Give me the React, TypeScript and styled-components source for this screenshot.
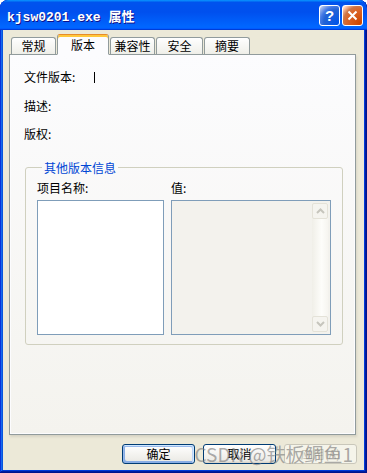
import React from 'react'
import styled, { createGlobalStyle } from 'styled-components'

const GlobalStyle = createGlobalStyle`
  html, body {
    margin: 0;
    padding: 0;
    background: #fff;
  }
  body {
    font-family: 'Noto Sans CJK SC', 'Liberation Sans', sans-serif;
    font-size: 12px;
    color: #000;
  }
`

const Window = styled.div`
  position: relative;
  width: 367px;
  height: 473px;
  display: flex;
  flex-direction: column;
  background: #0831d9;
  border-radius: 8px 8px 0 0;
  box-shadow: inset -1px -1px #00138c, inset 1px 1px #0831d9, inset -2px -2px #001ea0,
    inset 2px 2px #166aee, inset -3px -3px #003bda, inset 3px 3px #0855dd;
  overflow: hidden;
`

const TitleBar = styled.div`
  height: 30px;
  flex: none;
  display: flex;
  align-items: center;
  padding: 0 4px 0 7px;
  background: linear-gradient(180deg, #0997ff, #0053ee 8%, #0050ee 40%, #06f 88%, #06f 93%, #005bff 95%, #003dd7 96%, #003dd7);
  border-radius: 8px 8px 0 0;
`

const Title = styled.div`
  font-family: 'Liberation Mono', 'Noto Sans CJK SC', monospace;
  font-weight: bold;
  font-size: 13px;
  color: #fff;
  text-shadow: 1px 1px #0f1089;
  white-space: nowrap;
`

const Controls = styled.div`
  margin-left: auto;
  display: flex;
  gap: 2px;
`

const CaptionButton = styled.div<{ $close?: boolean }>`
  width: 21px;
  height: 21px;
  box-sizing: border-box;
  border: 1px solid #fff;
  border-radius: 3px;
  display: flex;
  align-items: center;
  justify-content: center;
  color: #fff;
  font-family: 'Liberation Sans', sans-serif;
  font-weight: bold;
  font-size: 15px;
  background: ${(p) =>
    p.$close
      ? 'radial-gradient(circle at 90% 90%, #cc4600 0, #dc6527 55%, #cd7546 70%, #ffccb2 90%, #fff 100%)'
      : 'radial-gradient(circle at 90% 90%, #0054e9 0, #2263d5 55%, #4479e4 70%, #a3bbec 90%, #fff 100%)'};
`

const Body = styled.div`
  flex: 1;
  margin: 0 3px 3px;
  background: #ece9d8;
  display: flex;
  flex-direction: column;
  padding: 4px 7px 0 6px;
`

const TabStrip = styled.div`
  position: relative;
  z-index: 1;
  height: 21px;
  display: flex;
  align-items: flex-end;
  padding-left: 2px;
  margin-bottom: -1px;
`

const Tab = styled.div<{ $active?: boolean; $w: number }>`
  box-sizing: border-box;
  width: ${(p) => p.$w}px;
  height: ${(p) => (p.$active ? 21 : 17)}px;
  margin-right: 1px;
  margin-bottom: ${(p) => (p.$active ? 0 : 1)}px;
  border: 1px solid #919b9c;
  border-bottom: ${(p) => (p.$active ? '1px solid #fcfcfe' : 'none')};
  border-top-color: ${(p) => (p.$active ? '#e68b2c' : '#919b9c')};
  border-radius: 3px 3px 0 0;
  box-shadow: ${(p) => (p.$active ? 'inset 0 2px #ffc83c' : 'none')};
  background: ${(p) =>
    p.$active ? '#fcfcfe' : 'linear-gradient(180deg, #fff, #fafaf9 26%, #f0f0ea 95%, #ecebe5)'};
  display: flex;
  align-items: ${(p) => (p.$active ? 'flex-start' : 'center')};
  padding-top: ${(p) => (p.$active ? 3 : 0)}px;
  justify-content: center;
  line-height: 14px;
  white-space: nowrap;
`

const Panel = styled.div`
  box-sizing: border-box;
  width: 347px;
  height: 381px;
  flex: none;
  border: 1px solid #919b9c;
  background: linear-gradient(180deg, #fcfcfe, #f4f3ee);
  box-shadow: inset 1px 1px #fcfcfe, inset -1px -1px #fcfcfe, 1px 2px 2px 0 rgba(208, 206, 191, 0.75);
  padding: 8px 0 0 14px;
`

const InfoRow = styled.div`
  height: 28.5px;
  display: flex;
  align-items: center;
  line-height: 14px;
`

const InfoLabel = styled.div`
  width: 70px;
  flex: none;
`

const Caret = styled.span`
  width: 1px;
  height: 11px;
  background: #000;
`

const Group = styled.fieldset`
  box-sizing: border-box;
  width: 318px;
  margin: 12px 0 0 1px;
  padding: 6px 11px 9px;
  border: 1px solid #d0d0bf;
  border-radius: 3px;
`

const GroupTitle = styled.legend`
  margin-left: 5px;
  padding: 0 2px;
  color: #0046d5;
  line-height: 14px;
`

const Columns = styled.div`
  display: grid;
  grid-template-columns: 127px 160px;
  column-gap: 7px;
  row-gap: 5px;
`

const ColumnHead = styled.div`
  line-height: 14px;
`

const ListBox = styled.div<{ $disabled?: boolean }>`
  box-sizing: border-box;
  height: 135px;
  border: 1px solid #7f9db9;
  background: ${(p) => (p.$disabled ? '#f3f2ed' : '#fff')};
  display: flex;
  justify-content: flex-end;
  padding: 2px 2px 2px 0;
`

const ScrollBar = styled.div`
  width: 16px;
  display: flex;
  flex-direction: column;
  justify-content: space-between;
  background: linear-gradient(90deg, #f0efe8, #fdfdfa 60%, #f6f5f0);
`

const ArrowButton = styled.div`
  box-sizing: border-box;
  width: 16px;
  height: 16px;
  border: 1px solid #e4e2d8;
  border-radius: 2px;
  background: #f5f4ef;
  display: flex;
  align-items: center;
  justify-content: center;
`

const ButtonRow = styled.div`
  display: flex;
  justify-content: flex-end;
  gap: 8px;
  margin-top: 9px;
`

const Button = styled.div<{ $default?: boolean; $disabled?: boolean }>`
  box-sizing: border-box;
  width: 73px;
  height: 20px;
  border: 1px solid ${(p) => (p.$disabled ? '#c9c7ba' : '#003c74')};
  border-radius: 3px;
  display: flex;
  align-items: center;
  justify-content: center;
  line-height: 14px;
  color: ${(p) => (p.$disabled ? '#c4c1b2' : '#000')};
  background: ${(p) =>
    p.$disabled ? '#f5f4ea' : 'linear-gradient(180deg, #fff, #ecebe6 86%, #d6d0c5)'};
  box-shadow: ${(p) =>
    p.$default
      ? 'inset -1px 1px #cee7ff, inset 1px 2px #98b8ea, inset -2px 2px #bcd4f6, inset 1px -1px #89ade4, inset 2px -2px #89ade4'
      : 'none'};
`

const Watermark = styled.div`
  position: absolute;
  right: 14px;
  bottom: 7px;
  font-size: 19px;
  line-height: 24px;
  color: rgba(125, 125, 125, 0.65);
  white-space: nowrap;
  pointer-events: none;
`

const Chevron = ({ down }: { down?: boolean }) => (
  <svg width="9" height="6" viewBox="0 0 9 6">
    <polyline
      points={down ? '1,1 4.5,4.5 8,1' : '1,5 4.5,1.5 8,5'}
      fill="none"
      stroke="#c6c5bd"
      strokeWidth="2"
    />
  </svg>
)

const tabs = [
  { label: '常规', w: 45 },
  { label: '版本', w: 52, active: true },
  { label: '兼容性', w: 45 },
  { label: '安全', w: 47 },
  { label: '摘要', w: 46 },
]

const App = () => (
  <>
    <GlobalStyle />
    <Window>
      <TitleBar>
        <Title>kjsw0201.exe 属性</Title>
        <Controls>
          <CaptionButton>?</CaptionButton>
          <CaptionButton $close>
            <svg width="11" height="11" viewBox="0 0 11 11">
              <path d="M1.5 1.5 L9.5 9.5 M9.5 1.5 L1.5 9.5" stroke="#fff" strokeWidth="2" />
            </svg>
          </CaptionButton>
        </Controls>
      </TitleBar>
      <Body>
        <TabStrip>
          {tabs.map((t) => (
            <Tab key={t.label} $w={t.w} $active={t.active}>
              {t.label}
            </Tab>
          ))}
        </TabStrip>
        <Panel>
          <InfoRow>
            <InfoLabel>文件版本:</InfoLabel>
            <Caret />
          </InfoRow>
          <InfoRow>
            <InfoLabel>描述:</InfoLabel>
          </InfoRow>
          <InfoRow>
            <InfoLabel>版权:</InfoLabel>
          </InfoRow>
          <Group>
            <GroupTitle>其他版本信息</GroupTitle>
            <Columns>
              <ColumnHead>项目名称:</ColumnHead>
              <ColumnHead>值:</ColumnHead>
              <ListBox />
              <ListBox $disabled>
                <ScrollBar>
                  <ArrowButton>
                    <Chevron />
                  </ArrowButton>
                  <ArrowButton>
                    <Chevron down />
                  </ArrowButton>
                </ScrollBar>
              </ListBox>
            </Columns>
          </Group>
        </Panel>
        <ButtonRow>
          <Button $default>确定</Button>
          <Button>取消</Button>
          <Button $disabled>应用(A)</Button>
        </ButtonRow>
      </Body>
      <Watermark>CSDN @铁板鲷鱼1</Watermark>
    </Window>
  </>
)

export default App
